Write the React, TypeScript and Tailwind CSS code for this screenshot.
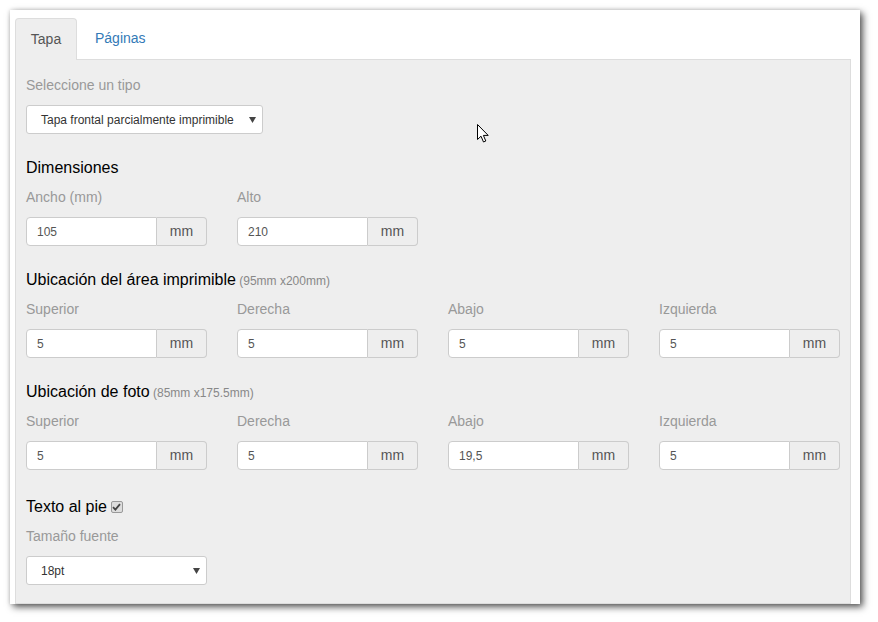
import React from 'react';

function UnitInput({ value }: { value: string }) {
  return (
    <div className="flex h-[29px] w-[181px]">
      <input
        readOnly
        value={value}
        className="w-[131px] h-full bg-white border border-[#ccc] rounded-l-[4px] pl-[10px] text-[12px] text-[#555] outline-none"
      />
      <span className="w-[50px] h-full flex items-center justify-center border border-l-0 border-[#ccc] rounded-r-[4px] bg-[#eee] text-[14px] text-[#555]">
        mm
      </span>
    </div>
  );
}

function Field({ label, value }: { label: string; value: string }) {
  return (
    <div className="flex flex-col">
      <span className="text-[14px] leading-[20px] text-[#999]">{label}</span>
      <div className="mt-[10px]">
        <UnitInput value={value} />
      </div>
    </div>
  );
}

function FakeSelect({ text, width }: { text: string; width: string }) {
  return (
    <div className={`${width} h-[29px] bg-white border border-[#ccc] rounded-[3px] flex items-center justify-between pl-[14px] pr-[6px]`}>
      <span className="text-[12px] text-[#333]">{text}</span>
      <svg width="7" height="6" viewBox="0 0 7 6">
        <path d="M0 0 L7 0 L3.5 6 Z" fill="#444" />
      </svg>
    </div>
  );
}

function Heading({ title, note }: { title: string; note?: string }) {
  return (
    <div className="text-[16px] leading-[22px] text-black">
      {title}
      {note && <span className="text-[12px] text-[#888]"> {note}</span>}
    </div>
  );
}

export default function App() {
  const area = [
    ['Superior', '5'],
    ['Derecha', '5'],
    ['Abajo', '5'],
    ['Izquierda', '5'],
  ];
  const foto = [
    ['Superior', '5'],
    ['Derecha', '5'],
    ['Abajo', '19,5'],
    ['Izquierda', '5'],
  ];

  return (
    <div className="w-[878px] h-[622px] bg-white relative font-['Liberation_Sans',Arial,sans-serif]">
      <div className="absolute left-[10px] top-[10px] w-[850px] h-[594px] bg-white overflow-hidden shadow-[3px_3px_7px_rgba(0,0,0,0.65),0_0_4px_rgba(0,0,0,0.15)]">
        <div className="pt-[8px] pl-[5px] pr-[9px] h-full flex flex-col">
          {/* tabs */}
          <div className="flex h-[41px] relative z-10">
            <div className="w-[62px] h-[42px] bg-[#eee] border border-[#ddd] border-b-0 rounded-t-[4px] flex items-center justify-center text-[14px] text-[#555]">
              Tapa
            </div>
            <div className="pl-[18px] flex items-center text-[14px] text-[#337ab7] h-[41px]">
              Páginas
            </div>
          </div>
          {/* panel */}
          <div className="flex-1 bg-[#eee] border border-[#ddd] px-[10px] pt-[15px]">
            <div className="text-[14px] leading-[20px] text-[#999]">Seleccione un tipo</div>
            <div className="mt-[10px]">
              <FakeSelect text="Tapa frontal parcialmente imprimible" width="w-[237px]" />
            </div>

            <div className="mt-[23px]">
              <Heading title="Dimensiones" />
            </div>
            <div className="mt-[8px] flex gap-[30px]">
              <Field label="Ancho (mm)" value="105" />
              <Field label="Alto" value="210" />
            </div>

            <div className="mt-[23px]">
              <Heading title="Ubicación del área imprimible" note="(95mm x200mm)" />
            </div>
            <div className="mt-[7px] flex gap-[30px]">
              {area.map(([l, v], i) => (
                <Field key={i} label={l} value={v} />
              ))}
            </div>

            <div className="mt-[23px]">
              <Heading title="Ubicación de foto" note="(85mm x175.5mm)" />
            </div>
            <div className="mt-[7px] flex gap-[30px]">
              {foto.map(([l, v], i) => (
                <Field key={i} label={l} value={v} />
              ))}
            </div>

            <div className="mt-[26px] flex items-center gap-[4px]">
              <Heading title="Texto al pie" />
              <span className="w-[12px] h-[12px] border border-[#999] rounded-[2px] bg-[#ddd] flex items-center justify-center">
                <svg width="9" height="8" viewBox="0 0 9 8">
                  <path d="M1 4.2 L3.4 6.6 L8 1.2" stroke="#444" strokeWidth="1.8" fill="none" />
                </svg>
              </span>
            </div>
            <div className="mt-[8px] text-[14px] leading-[20px] text-[#999]">Tamaño fuente</div>
            <div className="mt-[10px]">
              <FakeSelect text="18pt" width="w-[181px]" />
            </div>
          </div>
        </div>
      </div>
      {/* mouse cursor */}
      <svg className="absolute left-[477px] top-[124px]" width="13" height="20" viewBox="0 0 13 20">
        <path
          d="M0.5 0.5 L0.5 15.5 L4 12.2 L6.5 18 L8.8 17 L6.4 11.4 L11.2 11.4 Z"
          fill="#fff"
          stroke="#000"
          strokeWidth="1"
        />
      </svg>
    </div>
  );
}
